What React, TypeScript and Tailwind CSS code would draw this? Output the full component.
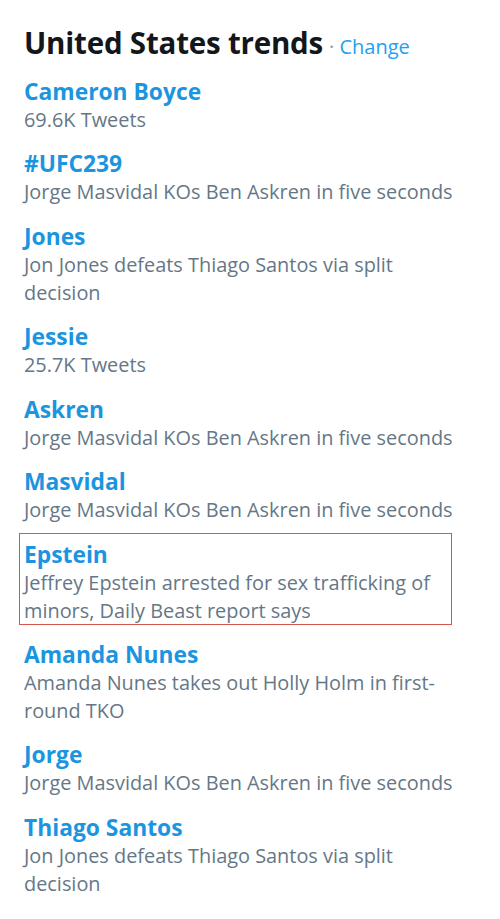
const trends = [
  { name: "Cameron Boyce", desc: "69.6K Tweets" },
  { name: "#UFC239", desc: "Jorge Masvidal KOs Ben Askren in five seconds" },
  { name: "Jones", desc: "Jon Jones defeats Thiago Santos via split decision" },
  { name: "Jessie", desc: "25.7K Tweets" },
  { name: "Askren", desc: "Jorge Masvidal KOs Ben Askren in five seconds" },
  { name: "Masvidal", desc: "Jorge Masvidal KOs Ben Askren in five seconds" },
  {
    name: "Epstein",
    desc: "Jeffrey Epstein arrested for sex trafficking of minors, Daily Beast report says",
    marked: true,
  },
  { name: "Amanda Nunes", desc: "Amanda Nunes takes out Holly Holm in first-round TKO" },
  { name: "Jorge", desc: "Jorge Masvidal KOs Ben Askren in five seconds" },
  { name: "Thiago Santos", desc: "Jon Jones defeats Thiago Santos via split decision" },
];

export default function App() {
  return (
    <div className="min-h-screen w-[500px] bg-white font-['Open_Sans','Liberation_Sans',sans-serif]">
      <div className="pl-[24px] pt-[25px]">
        {/* 見出し */}
        <div className="flex items-baseline">
          <h2 className="text-[29.5px] font-bold leading-[36px] tracking-[-0.2px] text-[#14171a]">
            United States trends
          </h2>
          <span className="ml-[6px] text-[20px] text-[#1da1f2]">
            <span className="text-[#8899a6]">·</span> Change
          </span>
        </div>

        {/* トレンド一覧 */}
        <ul className="mt-[16px] flex w-[440px] flex-col gap-[16.7px]">
          {trends.map((t) => (
            <li key={t.name} className="relative">
              {t.marked && (
                <span className="pointer-events-none absolute left-[-5px] top-[-8px] h-[92px] w-[433px] border border-[#d9534f]" />
              )}
              <div className="text-[22.8px] font-bold leading-[28px] text-[#1b95e0]">
                {t.name}
              </div>
              <div className="text-[19.9px] leading-[27.8px] text-[#657786]">
                {t.desc}
              </div>
            </li>
          ))}
        </ul>
      </div>
    </div>
  );
}
